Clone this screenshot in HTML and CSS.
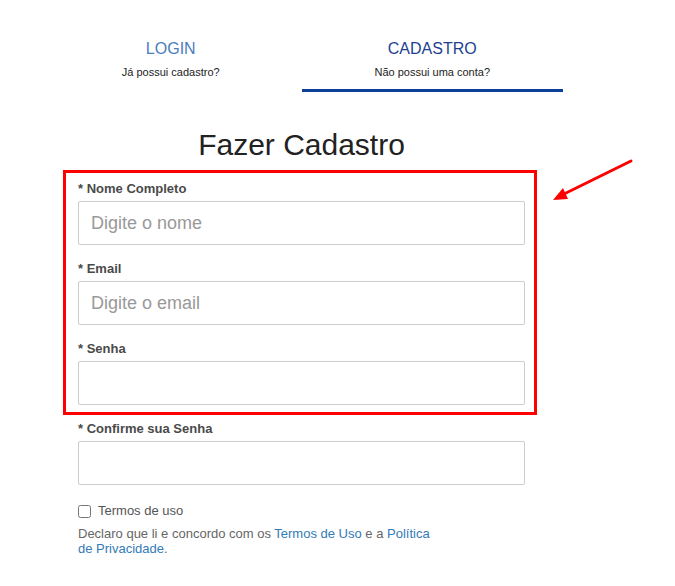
FILE: index.html
```html
<!DOCTYPE html>
<html lang="pt-BR">
<head>
<meta charset="utf-8">
<title>Fazer Cadastro</title>
<link rel="stylesheet" href="styles.css">
</head>
<body>
<div class="page">
  <nav class="tabs">
    <a class="tab" href="#">
      <span class="tab-title">LOGIN</span>
      <span class="tab-sub">Já possui cadastro?</span>
    </a>
    <a class="tab active" href="#">
      <span class="tab-title">CADASTRO</span>
      <span class="tab-sub">Não possui uma conta?</span>
    </a>
  </nav>

  <h1 class="heading">Fazer Cadastro</h1>

  <form class="form">
    <div class="highlight">
      <div class="field">
        <label class="label">* Nome Completo</label>
        <input class="input" type="text" placeholder="Digite o nome">
      </div>
      <div class="field">
        <label class="label">* Email</label>
        <input class="input" type="email" placeholder="Digite o email">
      </div>
      <div class="field">
        <label class="label">* Senha</label>
        <input class="input" type="password">
      </div>
      <div class="annot-box"></div>
    </div>
    <div class="field">
      <label class="label">* Confirme sua Senha</label>
      <input class="input" type="password">
    </div>

    <label class="check">
      <input type="checkbox" class="check-box">
      <span>Termos de uso</span>
    </label>
    <p class="terms">Declaro que li e concordo com os <a href="#">Termos de Uso</a> e a <a href="#">Política<br>de Privacidade</a>.</p>
  </form>
</div>
<svg class="annot-arrow" width="90" height="50" viewBox="0 0 90 50">
  <line x1="81" y1="5" x2="12" y2="39" stroke="#ff0000" stroke-width="3" stroke-linecap="round"/>
  <polygon points="3,44 13,32 18,43" fill="#ff0000"/>
</svg>
</body>
</html>
```

FILE: styles.css
```css
* { box-sizing: border-box; }

html, body {
  margin: 0;
  padding: 0;
  background: #ffffff;
}

body {
  font-family: "Liberation Sans", Arial, sans-serif;
  color: #333;
  position: relative;
  min-height: 586px;
}

.page {
  width: 523px;
  margin-left: 40px;
}

.tabs {
  display: flex;
}

.tab {
  flex: 1;
  display: flex;
  flex-direction: column;
  align-items: center;
  padding: 40px 0 10px;
  border-bottom: 3px solid transparent;
  text-decoration: none;
}

.tab.active {
  border-bottom-color: #0d3f9a;
}

.tab-title {
  font-size: 16px;
  line-height: 18px;
  color: #4a7cc0;
}

.tab.active .tab-title {
  color: #1d3f92;
}

.tab-sub {
  margin-top: 8px;
  font-size: 11px;
  line-height: 13px;
  color: #222;
}

.heading {
  margin: 36px 0 0;
  text-align: center;
  font-size: 30px;
  line-height: 34px;
  font-weight: normal;
  color: #222;
}

.form {
  padding: 19px 38px 0;
  display: flex;
  flex-direction: column;
}

.highlight {
  position: relative;
  display: flex;
  flex-direction: column;
  gap: 16px;
}

.annot-box {
  position: absolute;
  top: -11px;
  bottom: -10px;
  left: -15px;
  right: -12px;
  border: 3px solid #ff0000;
  pointer-events: none;
}

.field {
  display: flex;
  flex-direction: column;
  gap: 5px;
}

.highlight + .field {
  margin-top: 16px;
}

.label {
  font-size: 13px;
  line-height: 15px;
  font-weight: bold;
  color: #4a4a4a;
}

.input {
  height: 44px;
  width: 100%;
  padding: 0 12px;
  border: 1px solid #cccccc;
  border-radius: 2px;
  font-family: "Liberation Sans", Arial, sans-serif;
  font-size: 18px;
  color: #333;
  background: #fff;
  outline: none;
}

.input::placeholder {
  color: #999;
}

.check {
  margin-top: 18px;
  display: flex;
  align-items: center;
  gap: 7px;
  font-size: 13px;
  line-height: 16px;
  color: #555;
}

.check-box {
  margin: 0;
  width: 13px;
  height: 13px;
}

.terms {
  margin: 7px 0 0;
  font-size: 13px;
  line-height: 15px;
  color: #666;
}

.terms a {
  color: #337ab7;
  text-decoration: none;
}

.annot-arrow {
  position: absolute;
  left: 550px;
  top: 156px;
}
```
